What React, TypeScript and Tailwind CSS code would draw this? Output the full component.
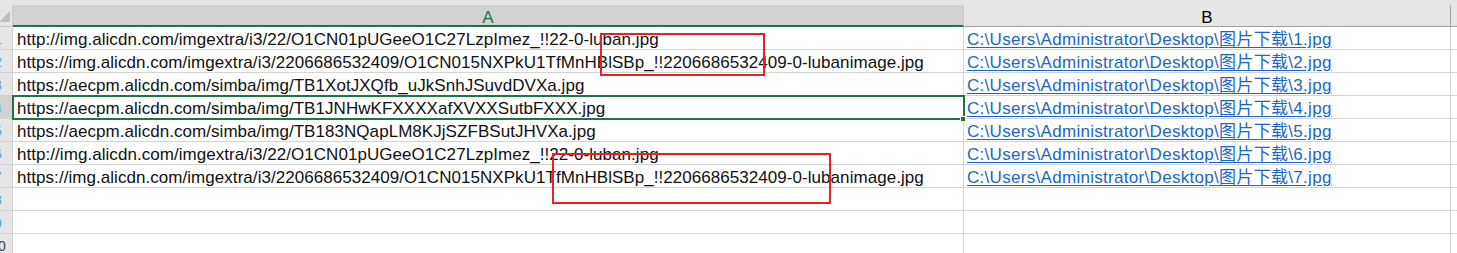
const urls = [
  "http://img.alicdn.com/imgextra/i3/22/O1CN01pUGeeO1C27LzpImez_!!22-0-luban.jpg",
  "https://img.alicdn.com/imgextra/i3/2206686532409/O1CN015NXPkU1TfMnHBlSBp_!!2206686532409-0-lubanimage.jpg",
  "https://aecpm.alicdn.com/simba/img/TB1XotJXQfb_uJkSnhJSuvdDVXa.jpg",
  "https://aecpm.alicdn.com/simba/img/TB1JNHwKFXXXXafXVXXSutbFXXX.jpg",
  "https://aecpm.alicdn.com/simba/img/TB183NQapLM8KJjSZFBSutJHVXa.jpg",
  "http://img.alicdn.com/imgextra/i3/22/O1CN01pUGeeO1C27LzpImez_!!22-0-luban.jpg",
  "https://img.alicdn.com/imgextra/i3/2206686532409/O1CN015NXPkU1TfMnHBlSBp_!!2206686532409-0-lubanimage.jpg",
];

const rows = Array.from({ length: 10 }, (_, i) => i + 1);

const font = "[font-family:'Liberation_Sans','Noto_Sans_CJK_SC',sans-serif]";

export default function App() {
  return (
    <div className={`relative w-[1457px] h-[253px] overflow-hidden bg-white ${font}`}>
      <div className="h-[5px] bg-[#e6e6e6]" />
      {/* column headers */}
      <div className="flex h-[22px] bg-[#e6e6e6] text-[17px] leading-[22px]">
        <div className="w-[13px] shrink-0 border-r border-b border-[#c8c8c8] overflow-hidden pt-[4px]">
          <svg width="13" height="15">
            <polygon points="10,2 10,13 -1,13" fill="#bfbfbf" />
          </svg>
        </div>
        <div className="w-[951px] shrink-0 text-center pt-[2px] bg-[#d2d2d2] border-r border-[#c8c8c8] border-b-2 border-b-[#217346] text-[#217346]">
          A
        </div>
        <div className="w-[487px] shrink-0 text-center pt-[2px] border-r border-r-[#a6a6a6] border-b border-b-[#9e9e9e] text-black">
          B
        </div>
        <div className="flex-1 border-b border-[#9e9e9e]" />
      </div>
      {/* rows */}
      {rows.map((n) => {
        const url = urls[n - 1];
        const selected = n === 4;
        return (
          <div key={n} className="flex h-[23px] text-[17px] leading-[22px]">
            <div
              className={`w-[13px] shrink-0 overflow-hidden border-r border-b border-[#d0d0d0] ${
                selected ? "bg-[#d2d2d2]" : "bg-[#e6e6e6]"
              }`}
            >
              <div
                className={`w-[30px] ml-[-17px] text-center text-[14px] leading-[24px] ${
                  n === 10 ? "text-[#444]" : "text-[#5aa0e0]"
                }`}
              >
                {n}
              </div>
            </div>
            <div className="w-[951px] shrink-0 border-r border-b border-[#d4d4d4] pl-[4px] pt-[2px] text-[#111] whitespace-nowrap tracking-[0.05px]">
              {url}
            </div>
            <div className="w-[487px] shrink-0 border-r border-b border-[#d4d4d4] pl-[3px] pt-[2px] whitespace-nowrap">
              {url && (
                <span className="text-[#1a66c9] underline underline-offset-2 tracking-[0.3px]">
                  {`C:\\Users\\Administrator\\Desktop\\图片下载\\${n}.jpg`}
                </span>
              )}
            </div>
            <div className="flex-1 border-b border-[#d4d4d4]" />
          </div>
        );
      })}
      {/* selected cell A4 */}
      <div className="absolute left-[12px] top-[95px] w-[953px] h-[25px] border-2 border-[#217346] pointer-events-none" />
      <div className="absolute left-[960px] top-[116px] w-[6px] h-[6px] bg-[#217346] border border-white" />
      {/* red annotation boxes */}
      <div className="absolute left-[600px] top-[33px] w-[165px] h-[43px] border-2 border-[#e8202a]" />
      <div className="absolute left-[552px] top-[153px] w-[279px] h-[51px] border-2 border-[#e8202a]" />
    </div>
  );
}
